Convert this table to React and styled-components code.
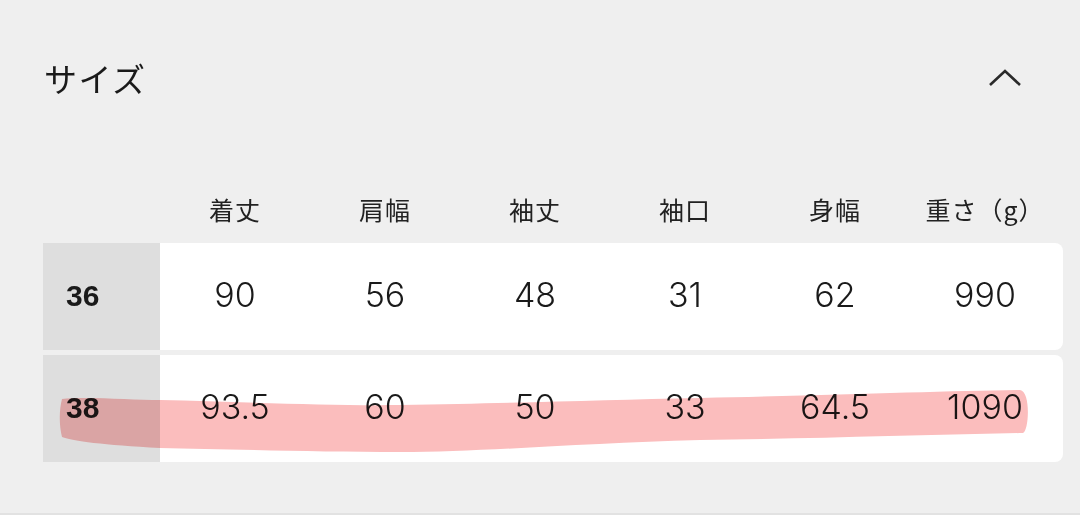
import React from "react";
import styled, { createGlobalStyle } from "styled-components";

const GlobalStyle = createGlobalStyle`
	html, body {
		margin: 0;
		padding: 0;
		background: #efefef;
	}
	body {
		font-family: "Noto Sans CJK JP", "Noto Sans", sans-serif;
		color: #1a1a1a;
	}
`;

const COLUMNS = ["着丈", "肩幅", "袖丈", "袖口", "身幅", "重さ（g）"];

const ROWS = [
	{ size: "36", values: ["90", "56", "48", "31", "62", "990"] },
	{ size: "38", values: ["93.5", "60", "50", "33", "64.5", "1090"], marked: true },
];

const Page = styled.div`
	width: 1080px;
	height: 515px;
	box-sizing: border-box;
	padding: 52px 17px 0 43px;
	border-bottom: 2px solid #e2e2e2;
`;

const TitleBar = styled.div`
	display: flex;
	align-items: center;
	justify-content: space-between;
	height: 52px;
`;

const Title = styled.h2`
	margin: 0 0 0 1px;
	font-size: 33px;
	font-weight: 400;
	line-height: 52px;
	letter-spacing: 1.5px;
`;

const Toggle = styled.button`
	display: flex;
	align-items: center;
	justify-content: center;
	width: 40px;
	height: 40px;
	margin-right: 38px;
	padding: 0;
	border: 0;
	background: none;
	cursor: pointer;
`;

const Table = styled.div`
	display: flex;
	flex-direction: column;
	gap: 5px;
	margin-top: 88px;
`;

const HeadRow = styled.div`
	display: grid;
	grid-template-columns: 117px repeat(6, 150px);
	height: 34px;
	margin-bottom: 12px;
	align-items: center;
`;

const HeadCell = styled.div`
	text-align: center;
	font-size: 25px;
	line-height: 34px;
	letter-spacing: 1px;
	color: #222;
	white-space: nowrap;
`;

const Row = styled.div`
	position: relative;
	display: grid;
	grid-template-columns: 117px repeat(6, 150px);
	height: 107px;
	background: #fff;
	border-radius: 0 8px 8px 0;
	overflow: hidden;
`;

const SizeCell = styled.div`
	display: flex;
	align-items: center;
	padding-left: 23px;
	background: #dedede;
	font-family: "Liberation Sans", "Noto Sans", sans-serif;
	font-size: 30px;
	font-weight: 700;
	padding-bottom: 2px;
`;

const ValueCell = styled.div`
	display: flex;
	align-items: center;
	justify-content: center;
	font-family: Inter, "Noto Sans", sans-serif;
	font-size: 34px;
	font-weight: 350;
	padding-bottom: 4px;
`;

const Marker = styled.svg`
	position: absolute;
	inset: 0;
	pointer-events: none;
	mix-blend-mode: multiply;
`;

function Highlight() {
	return (
		<Marker width="1020" height="107" viewBox="0 0 1020 107">
			<path
				d="M19 44 C 40 41, 90 45, 117 45 C 200 47, 290 51, 357 50 C 480 48, 560 45, 657 43 C 800 40, 900 36, 977 35 C 988 36, 986 76, 980 78 C 870 80, 760 84, 657 85 C 540 88, 440 97, 357 97 C 270 97, 180 94, 117 93 C 60 90, 30 86, 19 82 C 16 70, 16 55, 19 44 Z"
				fill="#fbbdbd"
			/>
		</Marker>
	);
}

export default function App() {
	return (
		<>
			<GlobalStyle />
			<Page>
				<TitleBar>
					<Title>サイズ</Title>
					<Toggle aria-label="閉じる">
						<svg width="34" height="20" viewBox="0 0 34 20">
							<polyline
								points="2,17 17,3 32,17"
								fill="none"
								stroke="#2a2a2a"
								strokeWidth="2.6"
							/>
						</svg>
					</Toggle>
				</TitleBar>
				<Table>
					<HeadRow>
						<div />
						{COLUMNS.map((c) => (
							<HeadCell key={c}>{c}</HeadCell>
						))}
					</HeadRow>
					{ROWS.map((r) => (
						<Row key={r.size}>
							<SizeCell>{r.size}</SizeCell>
							{r.values.map((v, i) => (
								<ValueCell key={i}>{v}</ValueCell>
							))}
							{r.marked && <Highlight />}
						</Row>
					))}
				</Table>
			</Page>
		</>
	);
}
